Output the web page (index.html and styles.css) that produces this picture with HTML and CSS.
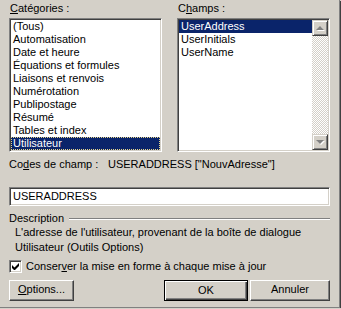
FILE: index.html
```html
<!DOCTYPE html>
<html lang="fr">
<head>
	<meta charset="UTF-8">
	<title>Champ</title>
	<link rel="stylesheet" href="styles.css">
</head>
<body>
	<div class="window">
		<div class="dialog">
			<div class="columns">
				<div class="col">
					<div class="label"><u>C</u>atégories :</div>
					<div class="listbox">
						<ul class="items">
							<li>(Tous)</li>
							<li>Automatisation</li>
							<li>Date et heure</li>
							<li>Équations et formules</li>
							<li>Liaisons et renvois</li>
							<li>Numérotation</li>
							<li>Publipostage</li>
							<li>Résumé</li>
							<li>Tables et index</li>
							<li class="selected focus">Utilisateur</li>
						</ul>
					</div>
				</div>
				<div class="col">
					<div class="label">C<u>h</u>amps :</div>
					<div class="listbox">
						<ul class="items">
							<li class="selected">UserAddress</li>
							<li>UserInitials</li>
							<li>UserName</li>
						</ul>
						<div class="scrollbar">
							<div class="sb-btn"><span class="arrow up"></span></div>
							<div class="sb-track"></div>
							<div class="sb-btn"><span class="arrow down"></span></div>
						</div>
					</div>
				</div>
			</div>

			<div class="codes">
				<span class="codes-label">Co<u>d</u>es de champ :</span>
				<span>USERADDRESS ["NouvAdresse"]</span>
			</div>

			<div class="textbox">USERADDRESS</div>

			<div class="group-head">
				<span>Description</span>
				<span class="rule"></span>
			</div>
			<div class="desc">
				L'adresse de l'utilisateur, provenant de la boîte de dialogue<br>
				Utilisateur (Outils Options)
			</div>

			<div class="check-row">
				<span class="checkbox">
					<svg width="7" height="7" viewBox="0 0 7 7"><path d="M0 2v3l2 2h1l4-4V0L2.5 4.5z" fill="#000"/></svg>
				</span>
				<span>Conser<u>v</u>er la mise en forme à chaque mise à jour</span>
			</div>

			<div class="buttons">
				<div class="btn btn-options"><u>O</u>ptions...</div>
				<div class="spacer"></div>
				<div class="btn btn-ok">OK</div>
				<div class="btn btn-cancel">Annuler</div>
			</div>
		</div>
	</div>
</body>
</html>
```

FILE: styles.css
```css
*{padding: 0;margin: 0;box-sizing: border-box;}
body{
	background-color: #d4d0c8;
	font-family: Tahoma, "Liberation Sans", Arial, sans-serif;
	font-size: 11px;
	color: #000;
}
.window{
	width: 340px;
	height: 308px;
	border-right: 1px solid #808080;
	border-bottom: 1px solid #808080;
	box-shadow: 1px 1px 0 #404040;
	background-color: #d4d0c8;
}
.dialog{
	width: 330px;
	padding: 1px 0 0 9px;
}

/* listes du haut */
.columns{
	display: flex;
	gap: 15px;
}
.col{
	width: 153px;
}
.label{
	line-height: 14px;
	height: 14px;
	margin-bottom: 3px;
	padding-left: 1px;
}
.listbox{
	display: flex;
	height: 134px;
	background-color: #fff;
	border: 1px solid;
	border-color: #808080 #fff #fff #808080;
	box-shadow: inset 1px 1px 0 #404040, inset -1px -1px 0 #d4d0c8;
	padding: 1px;
}
.items{
	flex: 1;
	list-style: none;
}
.items li{
	height: 13px;
	line-height: 13px;
	padding-left: 2px;
	white-space: nowrap;
}
.items li.selected{
	background-color: #0a246a;
	color: #fff;
}
.items li.focus{
	outline: 1px dotted #e6d58a;
	outline-offset: -1px;
}

/* barre de défilement */
.scrollbar{
	width: 16px;
	display: flex;
	flex-direction: column;
}
.sb-btn{
	width: 16px;
	height: 16px;
	background-color: #d4d0c8;
	border: 1px solid;
	border-color: #d4d0c8 #404040 #404040 #d4d0c8;
	box-shadow: inset 1px 1px 0 #fff, inset -1px -1px 0 #808080;
	display: flex;
	align-items: center;
	justify-content: center;
}
.sb-track{
	flex: 1;
	background: repeating-conic-gradient(#d4d0c8 0 25%, #fff 0 50%) 0 0 / 2px 2px;
}
.arrow{
	width: 0;
	height: 0;
	border-left: 4px solid transparent;
	border-right: 4px solid transparent;
}
.arrow.up{
	border-bottom: 4px solid #808080;
	filter: drop-shadow(1px 1px 0 #fff);
}
.arrow.down{
	border-top: 4px solid #808080;
	filter: drop-shadow(1px 1px 0 #fff);
}

/* code de champ */
.codes{
	display: flex;
	margin-top: 5px;
	line-height: 14px;
}
.codes-label{
	width: 99px;
}
.textbox{
	margin-top: 16px;
	height: 19px;
	line-height: 15px;
	padding-left: 2px;
	background-color: #fff;
	border: 1px solid;
	border-color: #808080 #fff #fff #808080;
	box-shadow: inset 1px 1px 0 #404040, inset -1px -1px 0 #d4d0c8;
	padding: 1px 3px;
}

/* description */
.group-head{
	display: flex;
	align-items: center;
	margin-top: 6px;
	line-height: 13px;
}
.group-head .rule{
	flex: 1;
	margin-left: 5px;
	border-top: 1px solid #808080;
	border-bottom: 1px solid #fff;
}
.desc{
	padding-left: 6px;
	line-height: 15px;
}
.check-row{
	display: flex;
	align-items: center;
	margin-top: 5px;
	line-height: 13px;
}
.checkbox{
	width: 13px;
	height: 13px;
	margin-right: 4px;
	background-color: #fff;
	border: 1px solid;
	border-color: #808080 #fff #fff #808080;
	box-shadow: inset 1px 1px 0 #404040, inset -1px -1px 0 #d4d0c8;
	display: flex;
	align-items: center;
	justify-content: center;
}

/* boutons */
.buttons{
	display: flex;
	gap: 2px;
	margin-top: 7px;
}
.spacer{
	flex: 1;
}
.btn{
	height: 21px;
	line-height: 17px;
	text-align: center;
	background-color: #d4d0c8;
	border: 1px solid;
	border-color: #fff #404040 #404040 #fff;
	box-shadow: inset -1px -1px 0 #808080;
}
.btn-options{
	width: 65px;
}
.btn-ok{
	width: 84px;
	border: 1px solid #000;
	box-shadow: inset 1px 1px 0 #fff, inset -1px -1px 0 #404040, inset -2px -2px 0 #808080;
	line-height: 19px;
}
.btn-cancel{
	width: 80px;
}
```
